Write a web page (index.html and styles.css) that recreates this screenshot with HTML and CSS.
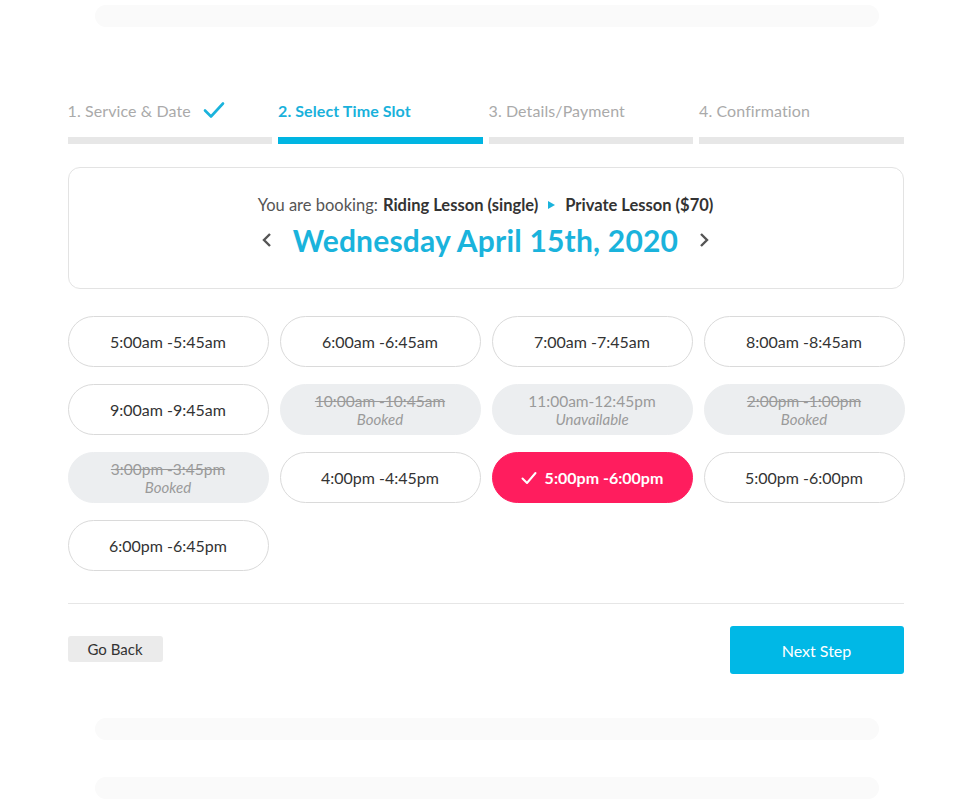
FILE: index.html
```html
<!DOCTYPE html>
<html lang="en">

<head>
    <meta charset="UTF-8">
    <meta name="viewport" content="width=device-width, initial-scale=1.0">
    <title>Select Time Slot</title>
    <link rel="stylesheet" href="styles.css">
</head>

<body>
    <div class="ghost ghost-top"></div>

    <main class="booking">
        <ol class="steps">
            <li class="step done">
                <span class="step-label">1. Service &amp; Date
                    <svg class="step-check" width="22" height="18" viewBox="0 0 22 18">
                        <path d="M2 9.5 L8 15.5 L20 2.5" fill="none" stroke="#1ab3dc" stroke-width="2.6" stroke-linecap="round" stroke-linejoin="round" />
                    </svg>
                </span>
                <span class="step-bar"></span>
            </li>
            <li class="step active">
                <span class="step-label">2. Select Time Slot</span>
                <span class="step-bar"></span>
            </li>
            <li class="step">
                <span class="step-label">3. Details/Payment</span>
                <span class="step-bar"></span>
            </li>
            <li class="step">
                <span class="step-label">4. Confirmation</span>
                <span class="step-bar"></span>
            </li>
        </ol>

        <section class="summary">
            <p class="summary-line">You are booking: <b>Riding Lesson (single)</b>
                <span class="arrow"></span>
                <b>Private Lesson ($70)</b>
            </p>
            <div class="date-nav">
                <button class="chev" type="button" aria-label="Previous day">
                    <svg width="12" height="16" viewBox="0 0 12 16"><path d="M9 2 L3 8 L9 14" fill="none" stroke="#555" stroke-width="2.4" /></svg>
                </button>
                <h1 class="date">Wednesday April 15th, 2020</h1>
                <button class="chev" type="button" aria-label="Next day">
                    <svg width="12" height="16" viewBox="0 0 12 16"><path d="M3 2 L9 8 L3 14" fill="none" stroke="#555" stroke-width="2.4" /></svg>
                </button>
            </div>
        </section>

        <div class="slots">
            <button class="slot" type="button">5:00am -5:45am</button>
            <button class="slot" type="button">6:00am -6:45am</button>
            <button class="slot" type="button">7:00am -7:45am</button>
            <button class="slot" type="button">8:00am -8:45am</button>
            <button class="slot" type="button">9:00am -9:45am</button>
            <button class="slot off" type="button" disabled><s>10:00am -10:45am</s><i>Booked</i></button>
            <button class="slot off" type="button" disabled><span>11:00am-12:45pm</span><i>Unavailable</i></button>
            <button class="slot off" type="button" disabled><s>2:00pm -1:00pm</s><i>Booked</i></button>
            <button class="slot off" type="button" disabled><s>3:00pm -3:45pm</s><i>Booked</i></button>
            <button class="slot" type="button">4:00pm -4:45pm</button>
            <button class="slot picked" type="button">
                <svg width="16" height="14" viewBox="0 0 16 14"><path d="M1.5 7.5 L6 12 L14.5 2" fill="none" stroke="#fff" stroke-width="2" stroke-linecap="round" stroke-linejoin="round" /></svg>
                5:00pm -6:00pm
            </button>
            <button class="slot" type="button">5:00pm -6:00pm</button>
            <button class="slot" type="button">6:00pm -6:45pm</button>
        </div>

        <div class="actions">
            <button class="btn-back" type="button">Go Back</button>
            <button class="btn-next" type="button">Next Step</button>
        </div>
    </main>

    <div class="ghost ghost-mid"></div>
    <div class="ghost ghost-low"></div>
</body>

</html>
```

FILE: styles.css
```css
body {
    margin: 0;
    padding: 0;
    font-family: Lato, "Open Sans", sans-serif;
    color: #333;
    background: #fff;
}

.ghost {
    width: 784px;
    height: 22px;
    margin: 0 auto;
    background: #fafafa;
    border-radius: 11px;
}

.ghost-top {
    margin-top: 5px;
}

.ghost-mid {
    margin-top: 44px;
}

.ghost-low {
    margin-top: 37px;
}

.booking {
    width: 838px;
    margin: 0 auto;
    padding-top: 73px;
}

/* steps */
.steps {
    display: grid;
    grid-template-columns: repeat(4, 1fr);
    gap: 6px;
    list-style: none;
    margin: 0 2px 0 0;
    padding: 0;
}

.step {
    display: flex;
    flex-direction: column;
    gap: 17px;
}

.step-label {
    display: flex;
    align-items: center;
    gap: 10px;
    height: 20px;
    font-size: 16px;
    color: #aaa;
    letter-spacing: 0.1px;
}

.step-check {
    margin-left: 2px;
}

.step-bar {
    height: 7px;
    background: #e7e7e7;
}

.step.active .step-label {
    color: #19b1db;
    font-weight: 700;
}

.step.active .step-bar {
    background: #00b5e2;
}

/* summary card */
.summary {
    margin: 23px 2px 0 0;
    height: 122px;
    border: 1px solid #e3e3e3;
    border-radius: 12px;
    box-sizing: border-box;
    display: flex;
    flex-direction: column;
    align-items: center;
    padding-top: 27px;
}

.summary-line {
    margin: 0;
    font-size: 16.5px;
    color: #555;
    display: flex;
    align-items: center;
    gap: 5px;
}

.summary-line b {
    font-weight: 700;
    color: #333;
}

.arrow {
    width: 0;
    height: 0;
    margin: 0 5px;
    border-left: 7px solid #1ab3dc;
    border-top: 4.5px solid transparent;
    border-bottom: 4.5px solid transparent;
}

.date-nav {
    display: flex;
    align-items: center;
    gap: 20px;
    margin-top: 7px;
}

.date {
    margin: 0;
    font-size: 30px;
    font-weight: 700;
    color: #1ab3dc;
    letter-spacing: 0.2px;
}

.chev {
    border: none;
    background: none;
    padding: 0;
    display: flex;
    cursor: pointer;
}

/* time slots */
.slots {
    display: grid;
    grid-template-columns: repeat(4, 201px);
    column-gap: 11px;
    row-gap: 17px;
    margin-top: 27px;
}

.slot {
    height: 51px;
    border: 1px solid #dadada;
    border-radius: 26px;
    background: #fff;
    font-family: inherit;
    font-size: 16px;
    color: #333;
    display: flex;
    flex-direction: column;
    align-items: center;
    justify-content: center;
    cursor: pointer;
}

.slot.off {
    background: #eceef0;
    border-color: #eceef0;
    color: #9a9a9a;
    font-size: 15.5px;
    line-height: 18px;
    cursor: default;
}

.slot.off i {
    font-size: 15px;
}

.slot.picked {
    flex-direction: row;
    gap: 8px;
    background: #ff1d5e;
    border-color: #ff1d5e;
    color: #fff;
    font-weight: 700;
}

/* bottom actions */
.actions {
    margin: 32px 2px 0 0;
    border-top: 1px solid #e6e6e6;
    padding-top: 22px;
    display: flex;
    justify-content: space-between;
    align-items: center;
}

.btn-back {
    border: none;
    background: #ebebeb;
    border-radius: 3px;
    font-family: inherit;
    font-size: 15px;
    color: #333;
    width: 95px;
    height: 26px;
    padding: 0;
    margin-top: -3px;
    cursor: pointer;
}

.btn-next {
    border: none;
    background: #00b8e6;
    border-radius: 3px;
    color: #fff;
    font-family: inherit;
    font-size: 16px;
    width: 174px;
    height: 48px;
    cursor: pointer;
}
```
